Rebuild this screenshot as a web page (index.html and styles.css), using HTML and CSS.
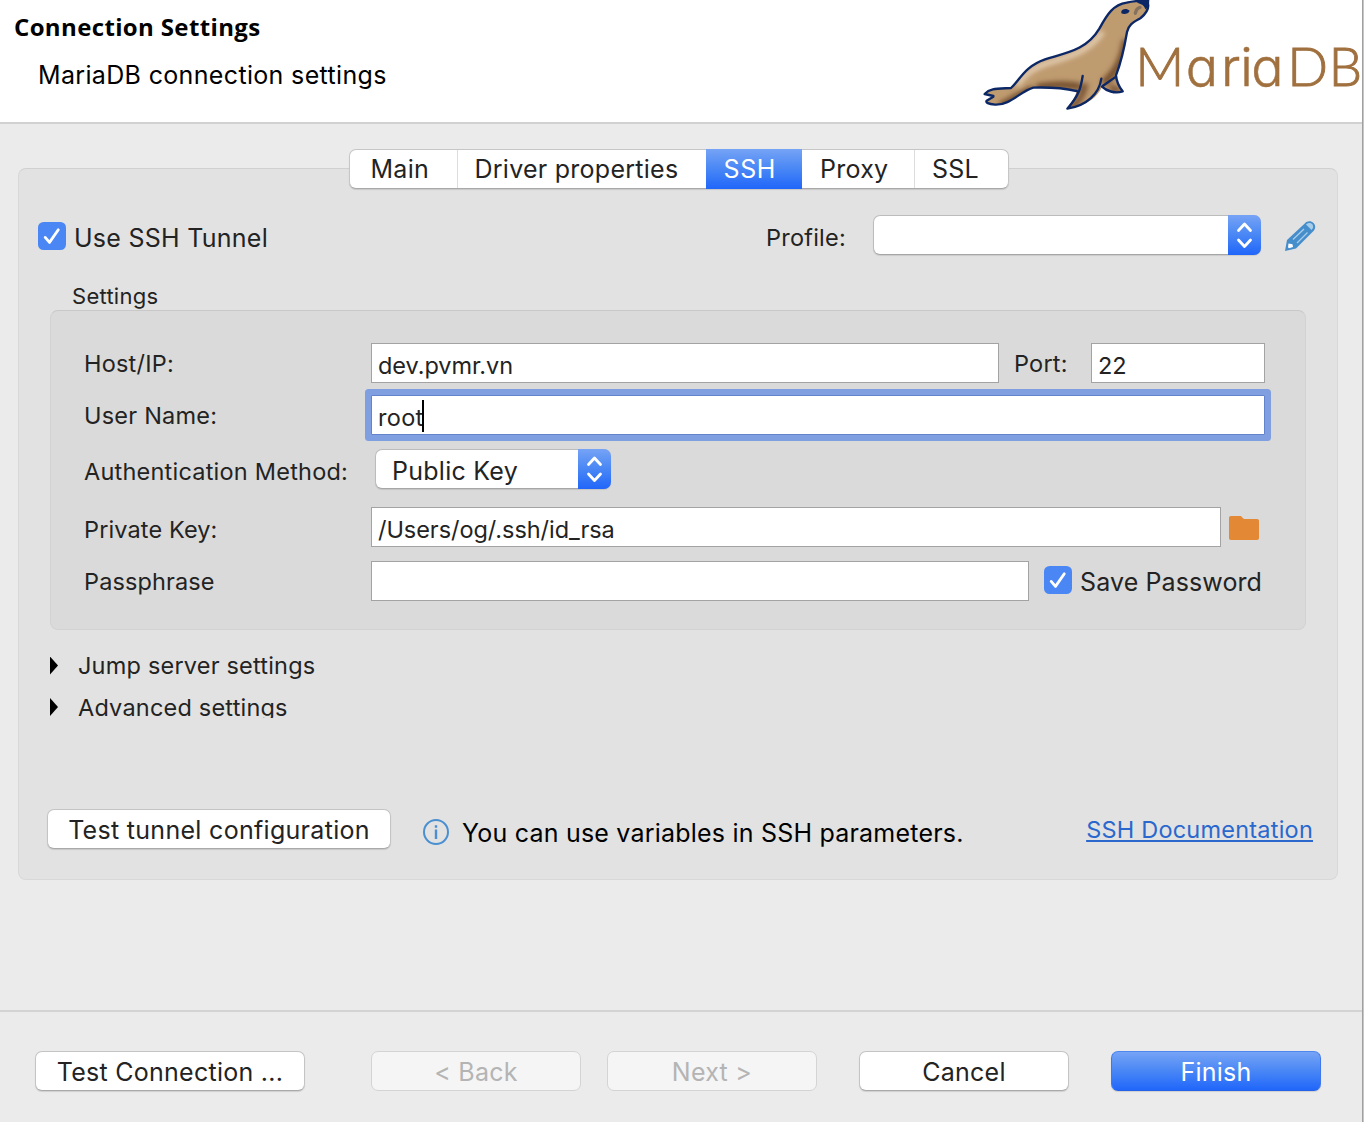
FILE: index.html
```html
<!DOCTYPE html>
<html lang="en">
<head>
<meta charset="utf-8">
<title>Connection Settings</title>
<link rel="stylesheet" href="styles.css">
</head>
<body>
<div class="dialog">
  <header class="header">
    <div class="heading">
      <h1>Connection Settings</h1>
      <p>MariaDB connection settings</p>
    </div>
    <svg class="logo" viewBox="0 0 1182 366" aria-label="MariaDB">
      <defs>
        <filter id="soft"><feGaussianBlur stdDeviation="8"/></filter>
        <clipPath id="sealClip"><path d="M44 282C60 264 80 266 123 264C150 240 162 200 225 178C290 158 350 150 388 86C412 42 430 14 470 8C495 2 515 2 531 2C540 20 534 36 512 54C492 66 476 72 471 96C462 150 452 190 438 226C440 250 450 264 458 274C434 282 408 272 396 260C384 290 350 318 292 326C308 300 318 290 320 270C270 262 220 262 190 263C150 275 120 316 75 314C55 312 46 308 50 300L70 290Z"/></clipPath>
      </defs>
      <path fill="#bf9b70" d="M44 282C60 264 80 266 123 264C150 240 162 200 225 178C290 158 350 150 388 86C412 42 430 14 470 8C495 2 515 2 531 2C540 20 534 36 512 54C492 66 476 72 471 96C462 150 452 190 438 226C440 250 450 264 458 274C434 282 408 272 396 260C384 290 350 318 292 326C308 300 318 290 320 270C270 262 220 262 190 263C150 275 120 316 75 314C55 312 46 308 50 300L70 290Z"/>
      <g clip-path="url(#sealClip)">
        <g filter="url(#soft)" fill="none">
          <path stroke="#e6d2b8" stroke-width="14" d="M140 256C170 220 185 206 232 190C300 168 350 160 398 96"/>
          <path stroke="#74502f" stroke-width="22" d="M200 262C250 252 290 252 330 260M468 120C458 176 444 210 400 250M90 318C130 300 150 280 190 268"/>
          <path stroke="#7d5738" stroke-width="20" d="M300 326C334 300 342 274 346 250M420 260L450 276"/>
        </g>
      </g>
      <path fill="none" stroke="#0b2765" stroke-width="7" stroke-linecap="round" stroke-linejoin="round" d="M70 288L44 282C60 264 80 266 123 264C150 240 162 200 225 178C290 158 350 150 388 86C412 42 430 14 470 8C495 2 515 2 531 2C540 20 534 36 512 54C492 66 476 72 471 96C462 150 452 190 438 226C440 250 450 264 458 274C434 282 408 272 396 260M438 230L398 258M394 236C388 280 350 318 292 326C326 288 332 266 338 228M320 273C270 262 220 262 190 263C150 275 120 316 75 314C55 312 46 308 50 302L70 290"/>
      <path fill="#0b2765" d="M502 0H538C538 14 534 24 526 28C522 14 512 12 502 8ZM454 34C458 26 470 24 479 32C476 42 462 44 454 40Z"/>
      <path fill="none" stroke="#84715e" stroke-width="10" stroke-linecap="round" d="M496 40C498 28 502 24 510 22"/>
      <text class="wordmark" y="257"><tspan class="m" x="496">M</tspan><tspan x="647">a</tspan><tspan x="753">r</tspan><tspan x="811">i</tspan><tspan x="844">a</tspan><tspan class="cap" x="952">D</tspan><tspan class="cap b" x="1076">B</tspan></text>
    </svg>
  </header>

  <main class="content">
    <nav class="tabs">
      <a class="tab main">Main</a>
      <a class="tab driver">Driver properties</a>
      <a class="tab ssh active">SSH</a>
      <a class="tab proxy">Proxy</a>
      <a class="tab ssl">SSL</a>
    </nav>

    <section class="panel">
      <div class="tunnel-row">
        <label class="check"><svg class="box" viewBox="0 0 28 28"><rect width="28" height="28" rx="5.5"/><path d="M7.2 15.4L11.5 20.4L20.3 7.8"/></svg><span>Use SSH Tunnel</span></label>
        <span class="label profile-label">Profile:</span>
        <div class="select profile"><span></span><svg class="stepper" viewBox="0 0 33 40"><path d="M10.5 15.5L16.5 9L22.5 15.5M10.5 25L16.5 31.5L22.5 25"/></svg></div>
        <svg class="pencil" viewBox="0 0 32 32"><path fill="#468dcb" d="M1 31L3 20L21 3.2C23 1 27 .5 29.5 3C32 5.5 31.5 9 29.5 11L12 28.5Z"/><path fill="#a7cdea" d="M22 4.5C24 2.5 27 2.5 28.5 4.5C29.8 6.5 29 8.5 27.5 10Z"/><path fill="none" stroke="#a7cdea" stroke-width="1.3" d="M9 19.5L20 9M13 23L23.500 12.500"/><path fill="#fff" d="M4.5 23.5L8.5 24.2L9 27L5 28.2L4 27.3Z"/></svg>
      </div>

      <div class="group-title">Settings</div>
      <div class="group">
        <div class="row host">
          <span class="label">Host/IP:</span>
          <div class="input grow">dev.pvmr.vn</div>
          <span class="label port">Port:</span>
          <div class="input port-input">22</div>
        </div>
        <div class="row user">
          <span class="label">User Name:</span>
          <div class="input grow focused"><span>root</span><i class="caret"></i></div>
        </div>
        <div class="row auth">
          <span class="label">Authentication Method:</span>
          <div class="select method"><span>Public Key</span><svg class="stepper" viewBox="0 0 33 40"><path d="M10.5 15.5L16.5 9L22.5 15.5M10.5 25L16.5 31.5L22.5 25"/></svg></div>
        </div>
        <div class="row key">
          <span class="label">Private Key:</span>
          <div class="input grow">/Users/og/.ssh/id_rsa</div>
          <svg class="folder" viewBox="0 0 30 24"><path d="M2 0H11.5C13 0 13.5 3 15.5 3H28C29.3 3 30 3.7 30 5V22C30 23.3 29.3 24 28 24H2C.7 24 0 23.3 0 22V2C0 .7.7 0 2 0Z"/></svg>
        </div>
        <div class="row pass">
          <span class="label">Passphrase</span>
          <div class="input grow"></div>
          <label class="check"><svg class="box" viewBox="0 0 28 28"><rect width="28" height="28" rx="5.5"/><path d="M7.2 15.4L11.5 20.4L20.3 7.8"/></svg><span>Save Password</span></label>
        </div>
      </div>

      <div class="expander"><i class="arrow"></i>Jump server settings</div>
      <div class="expander clipped"><i class="arrow"></i>Advanced settings</div>

      <div class="panel-footer">
        <a class="button tunnel-test">Test tunnel configuration</a>
        <svg class="info" viewBox="0 0 26 26"><circle cx="13" cy="13" r="12"/><path d="M13 10.5V20M13 6.2V8.8"/></svg>
        <span class="hint">You can use variables in SSH parameters.</span>
        <a class="link">SSH Documentation</a>
      </div>
    </section>
  </main>

  <footer class="footer">
    <a class="button test">Test Connection ...</a>
    <a class="button disabled">&lt; Back</a>
    <a class="button disabled">Next &gt;</a>
    <a class="button cancel">Cancel</a>
    <a class="button primary">Finish</a>
  </footer>
</div>
</body>
</html>
```
FILE: styles.css
```css
* { box-sizing: border-box; }
body { margin: 0; background: #ebebeb; color: #232323; font-family: Inter, "Liberation Sans", sans-serif; font-size: 25px; letter-spacing: 0.26px; }
svg { display: block; flex: none; }
.dialog { width: 1364px; height: 1122px; padding-right: 2px; display: flex; flex-direction: column; overflow: hidden; background: linear-gradient(90deg, #a0a0a0 1px, #c6c6c6 1px) right / 2px 100% no-repeat, #ebebeb; white-space: nowrap; }

.header { height: 124px; flex: none; display: flex; justify-content: space-between; background: #fff; border-bottom: 2px solid #d1d1d1; color: #000; }
.heading { padding: 7px 0 0 14px; }
.heading h1 { margin: 0; font: bold 24px/40px "Open Sans", "Noto Sans", sans-serif; letter-spacing: 0.36px; }
.heading p { margin: 8px 0 0 24px; line-height: 41px; letter-spacing: 0.34px; }
.logo { width: 394px; height: 122px; margin-right: -2px; }
.wordmark { font-family: Inter, sans-serif; font-size: 161px; font-weight: 300; font-feature-settings: "cv11"; letter-spacing: 0; fill: #a0703f; stroke: #a0703f; stroke-width: 1.5; }
.wordmark .m, .wordmark .cap { font-family: Lato, sans-serif; stroke-width: 3; }
.wordmark .m { font-size: 162px; }
.wordmark .b { font-size: 158px; }

.content { height: 886px; flex: none; padding: 25px 24px 0 18px; display: flex; flex-direction: column; }
.tabs { display: flex; align-self: center; width: 660px; height: 40px; margin-left: 1px; margin-bottom: -21px; position: relative; background: #fff; border: 1px solid #c6c6c6; border-bottom-color: #a9a9a9; border-radius: 7px; box-shadow: 0 1px 1px rgba(0,0,0,.12); }
.tab { line-height: 38px; flex: none; }
.tab.main { width: 107px; padding-left: 21px; }
.tab.driver { width: 249px; padding-left: 17px; border-left: 1px solid #ddd; }
.tab.ssh { width: 96px; padding-left: 18px; margin: -1px 0; line-height: 40px; letter-spacing: 0.6px; }
.tab.proxy { width: 112px; padding-left: 18.5px; }
.tab.ssl { flex: 1; padding-left: 17.5px; border-left: 1px solid #ddd; }
.active, .footer .primary { color: #fff; background: linear-gradient(#76a3f5, #4d8af5 45%, #2066fa); }

.panel { height: 712px; background: #e2e2e2; border: 1px solid #d8d8d8; border-top-color: #d0d0d0; border-radius: 8px; padding: 46px 19px 0; }
.tunnel-row { display: flex; height: 40px; align-items: center; }
.check { display: flex; align-items: center; gap: 8px; }
.check span { position: relative; top: 2px; }
.tunnel-row .check { padding-top: 2px; }
.box { width: 28px; height: 28px; }
.box rect { fill: #4a87f5; }
.box path, .stepper path { fill: none; stroke: #fff; stroke-width: 2.8; stroke-linecap: round; stroke-linejoin: round; }
.label { font-size: 23.5px; letter-spacing: 0.22px; }
.profile-label { margin-left: auto; width: 107px; padding-top: 5px; }
.select { display: flex; height: 40px; justify-content: space-between; line-height: 42px; background: #fff; border: 1px solid #bcbcbc; border-bottom-color: #a6a6a6; border-radius: 7px; box-shadow: 0 1px 1px rgba(0,0,0,.1); }
.profile { width: 388px; }
.stepper { width: 33px; height: 40px; margin: -1px; background: linear-gradient(#76a3f5, #4d8af5 45%, #2066fa); border-radius: 0 7px 7px 0; }
.pencil { width: 32px; height: 32px; margin: 2px 2px 0 23px; }

.group-title { font-size: 22px; line-height: 30px; padding: 26px 0 0 34px; height: 55px; }
.group { width: 1256px; height: 320px; margin-left: 12px; padding: 32px 40px 0 33px; background: #dadada; border: 1px solid #d2d2d2; border-top-color: #c8c8c8; border-radius: 8px; }
.row { display: flex; align-items: center; height: 40px; }
.row > .label:first-child { width: 287px; padding-top: 1px; }
.row.user { margin-top: 12px; }
.row.auth { margin-top: 14px; }
.row.key { margin-top: 18px; padding-right: 6px; }
.row.pass { margin-top: 14px; padding-right: 3px; }
.row.auth > .label:first-child, .row.key > .label:first-child { padding-top: 5px; }
.key .label, .pass .label { letter-spacing: 0.12px; }
.input { height: 40px; padding-left: 6px; line-height: 43px; font-size: 23.5px; letter-spacing: -0.05px; background: #fff; border: 1px solid #a3a3a3; }
.grow { flex: 1; }
.port { padding: 1px 0 0 15px; width: 92px; }
.port-input { width: 174px; }
.focused { border-color: #6384cb; box-shadow: 0 0 0 6px #7f9fe0; border-radius: 1px; display: flex; letter-spacing: 0.3px; }
.caret { width: 2px; height: 32px; margin: 4px 0 0 -1.6px; background: #000; }
.method { width: 236px; margin-left: 4px; padding-left: 16px; }
.folder { width: 30px; height: 24px; margin: 2px 0 0 8px; fill: #e38935; }
.pass .check { margin: -2px 0 0 15px; letter-spacing: 0.1px; }

.expander { display: flex; align-items: center; height: 42px; margin-left: 12px; font-size: 23.5px; letter-spacing: 0.2px; padding-top: 1px; }
.group + .expander { margin-top: 14px; }
.clipped { height: 32px; line-height: 42px; align-items: flex-start; overflow: hidden; }
.clipped .arrow { margin-top: 11px; }
.arrow { width: 8px; height: 18px; margin-right: 20px; background: #000; clip-path: polygon(0 0, 100% 50%, 0 100%); }

.panel-footer { display: flex; align-items: center; height: 40px; margin: 91px 5px 0 9px; }
.button { display: block; height: 40px; line-height: 40px; text-align: center; background: #fff; border: 1px solid #c4c4c4; border-bottom-color: #a9a9a9; border-radius: 7px; box-shadow: 0 1px 1px rgba(0,0,0,.12); }
.tunnel-test { width: 344px; letter-spacing: 0.3px; }
.info { width: 26px; height: 26px; margin: 6px 13px 0 32px; }
.info circle { fill: none; stroke: #4a90d0; stroke-width: 2; }
.info path { stroke: #4a90d0; stroke-width: 2.4; }
.hint { color: #000; padding-top: 7px; letter-spacing: 0.21px; }
.link { margin-left: auto; color: #2a68ce; font-size: 23.5px; letter-spacing: 0.22px; text-decoration: underline; text-decoration-thickness: 2px; text-underline-offset: 2px; text-decoration-skip-ink: none; }

.footer { flex: 1; display: flex; padding: 39px 41px 0 35px; border-top: 2px solid #d3d3d3; }
.footer .button { width: 210px; }
.footer .test { width: 270px; margin-right: 66px; }
.footer .disabled { color: #b4b4b4; background: #f5f5f5; border-color: #d4d4d4; box-shadow: none; }
.footer .disabled + .disabled { margin-left: 26px; }
.footer .cancel { margin: 0 42px; }
.footer .primary { border-color: #4f87f0 #3f78ee #2462e6; }
```
